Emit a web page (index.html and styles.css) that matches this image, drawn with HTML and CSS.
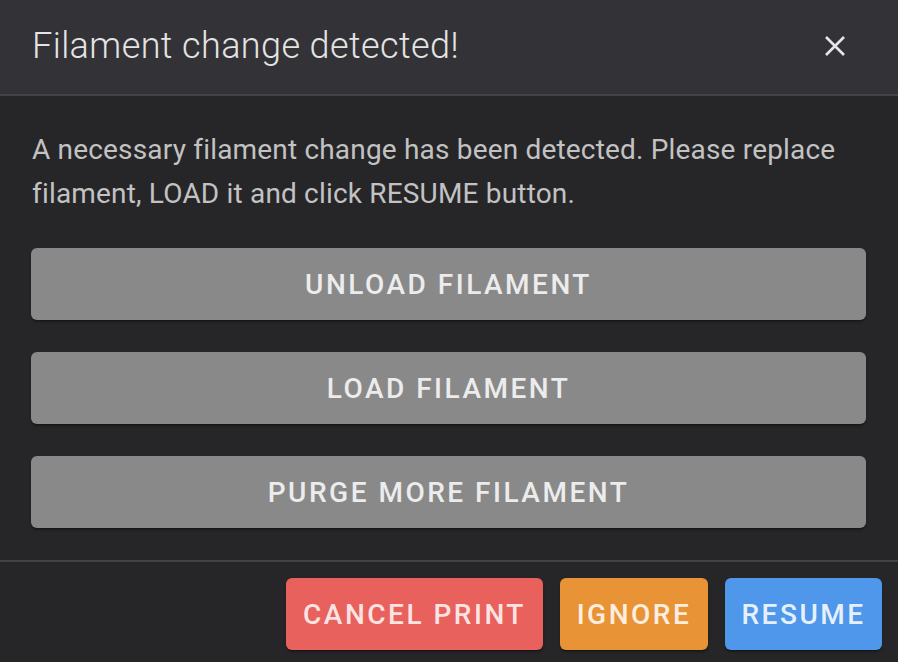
FILE: index.html
```html
<!DOCTYPE html>
<html>
<head>
<meta charset="utf-8">
<link rel="stylesheet" href="styles.css">
</head>
<body>
<div class="dialog">
  <div class="header">
    <div class="title">Filament change detected!</div>
    <button class="close" aria-label="close">
      <svg width="22" height="22" viewBox="0 0 22 22"><path d="M2 2L20 20M20 2L2 20" stroke="#e6e6e6" stroke-width="2.6" fill="none"/></svg>
    </button>
  </div>
  <div class="body">
    <p class="text">A necessary filament change has been detected. Please replace filament, LOAD it and click RESUME button.</p>
    <div class="actions">
      <button class="btn gray">UNLOAD FILAMENT</button>
      <button class="btn gray">LOAD FILAMENT</button>
      <button class="btn gray">PURGE MORE FILAMENT</button>
    </div>
  </div>
  <div class="footer">
    <button class="btn small red">CANCEL PRINT</button>
    <button class="btn small orange">IGNORE</button>
    <button class="btn small blue">RESUME</button>
  </div>
</div>
</body>
</html>
```
FILE: styles.css
```css
* { box-sizing: border-box; }
html, body { margin: 0; padding: 0; }
body {
  background: #262628;
  font-family: Roboto, "Liberation Sans", sans-serif;
  width: 898px;
  height: 662px;
  overflow: hidden;
}
.dialog { display: flex; flex-direction: column; }
.header {
  height: 96px;
  background: #333337;
  border-bottom: 2px solid #444448;
  display: flex;
  align-items: center;
  justify-content: space-between;
  padding: 0 32px 2px 32px;
}
.title {
  color: #e4e4e4;
  font-weight: 300;
  font-size: 36px;
  letter-spacing: 0.4px;
}
.close {
  background: none;
  border: none;
  padding: 0;
  width: 22px;
  height: 22px;
  margin-right: 20px;
  display: flex;
}
.body {
  padding: 32px 32px 32px 31px;
  border-bottom: 2px solid #434346;
}
.text {
  margin: 0 0 32px 1px;
  color: #c2c2c2;
  font-size: 28px;
  line-height: 44px;
  letter-spacing: 0.18px;
}
.actions { display: flex; flex-direction: column; gap: 32px; }
.btn {
  font-family: Roboto, "Liberation Sans", sans-serif;
  border: none;
  border-radius: 6px;
  height: 72px;
  font-size: 28px;
  font-weight: 500;
  letter-spacing: 2.5px;
  color: #ececec;
  box-shadow: 0 3px 2px -2px rgba(0,0,0,0.35), 0 2px 3px rgba(0,0,0,0.2);
}
.gray { background: #898989; width: 835px; }
.footer {
  display: flex;
  justify-content: flex-end;
  gap: 17px;
  padding: 16px 16px 0 0;
}
.small { padding: 0 16px; }
.red { background: #e9615c; color: #fde3e1; width: 257px; }
.orange { background: #e99337; color: #fdeee0; width: 148px; }
.blue { background: #4e97ea; color: #e6f0fc; width: 157px; }
```
